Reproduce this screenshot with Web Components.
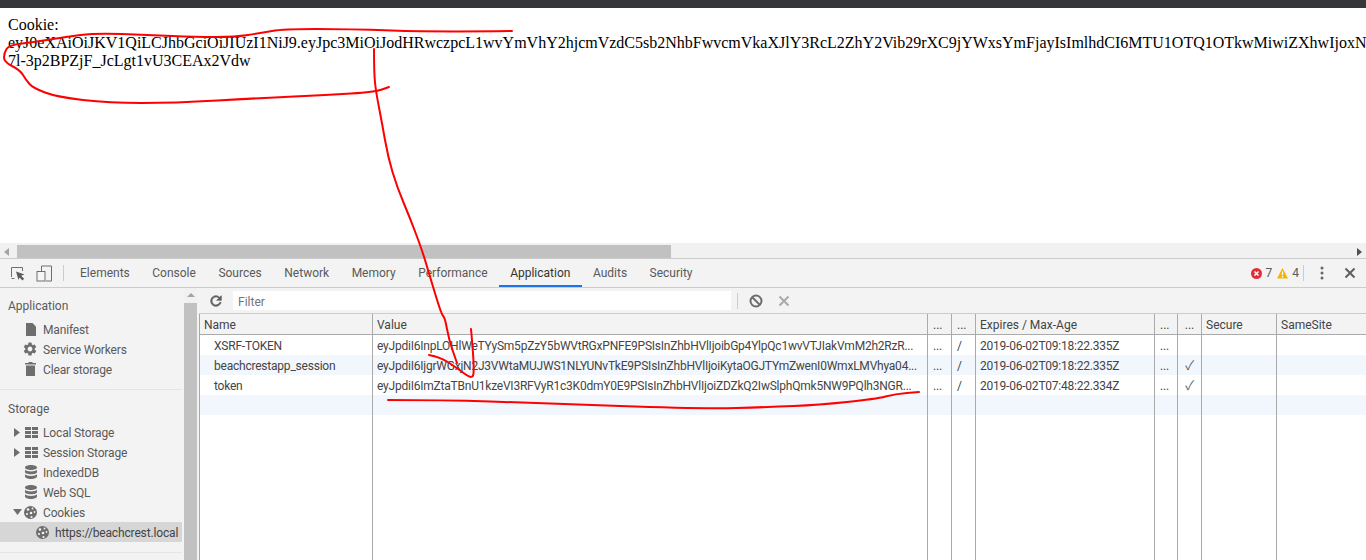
<!DOCTYPE html>
<html>
<head>
<meta charset="utf-8">
<title>Cookie</title>
<style>
  html, body { margin: 0; padding: 0; height: 100%; overflow: hidden; background: #fff; }
</style>
</head>
<body>
<app-shot>
  <cookie-page>Cookie:<br>eyJ0eXAiOiJKV1QiLCJhbGciOiJIUzI1NiJ9.eyJpc3MiOiJodHRwczpcL1wvYmVhY2hjcmVzdC5sb2NhbFwvcmVkaXJlY3RcL2ZhY2Vib29rXC9jYWxsYmFjayIsImlhdCI6MTU1OTQ1OTkwMiwiZXhwIjoxN<br>7l-3p2BPZjF_JcLgt1vU3CEAx2Vdw</cookie-page>
  <h-scroll></h-scroll>
  <dev-tools></dev-tools>
  <red-ink></red-ink>
</app-shot>

<script>
const ICONS = {
  inspect: '<path d="M1.5 11V1.5h11V5M1.5 12.5h3" fill="none" stroke="#6e6e6e"/><path d="M6 5.5l8.5 3-3.4 1.3 3 3-1.6 1.6-3-3L8.500 14z" fill="#5a5a5a"/>',
  device: '<path d="M5.500 6.500V1h10v15H10" fill="none" stroke="#6e6e6e"/><rect x="1" y="6.500" width="8" height="9.500" fill="#fff" fill-opacity=".3" stroke="#6e6e6e"/>',
  refresh: '<path d="M17.65 6.35A7.958 7.958 0 0 0 12 4c-4.42 0-7.99 3.58-7.99 8s3.57 8 7.99 8c3.73 0 6.84-2.55 7.73-6h-2.08A5.99 5.99 0 0 1 12 18c-3.31 0-6-2.69-6-6s2.69-6 6-6c1.66 0 3.14.69 4.22 1.78L13 11h7V4l-2.35 2.35z" fill="#5f5f5f" stroke="#5f5f5f"/>',
  block: '<circle cx="7" cy="7" r="5.500" fill="none" stroke="#6e6e6e" stroke-width="2"/><path d="M3 3l8 8" stroke="#6e6e6e" stroke-width="2"/>',
  cross: '<path d="M1.500 1.500l9 9M10.500 1.500l-9 9" stroke="currentColor" stroke-width="2" fill="none"/>',
  err: '<circle cx="5.500" cy="5.500" r="5.500" fill="#e32e38"/><path d="M3.500 3.500l4 4M7.500 3.500l-4 4" stroke="#fff" stroke-width="1.500"/>',
  warn: '<path d="M5.500 0L11 10.500H0z" fill="#f4b400"/><path d="M5.500 3.500v3.500M5.500 8v1.500" stroke="#fff" stroke-width="1.200"/>',
  kebab: '<circle cx="2" cy="2" r="1.500" fill="#666"/><circle cx="2" cy="7" r="1.500" fill="#666"/><circle cx="2" cy="12" r="1.500" fill="#666"/>',
  doc: '<path d="M0 0h6.500L10 3.500V13H0z" fill="#6e6e6e"/>',
  gear: '<path d="M19.14 12.94c.04-.3.06-.61.06-.94 0-.32-.02-.64-.07-.94l2.03-1.58a.49.49 0 0 0 .12-.61l-1.92-3.32a.488.488 0 0 0-.59-.22l-2.39.96c-.5-.38-1.03-.7-1.62-.94l-.36-2.54a.484.484 0 0 0-.48-.41h-3.84c-.24 0-.43.17-.47.41l-.36 2.54c-.59.24-1.13.57-1.62.94l-2.39-.96c-.22-.08-.47 0-.59.22L2.74 8.87c-.12.21-.08.47.12.61l2.03 1.58c-.05.3-.09.63-.09.94s.02.64.07.94l-2.03 1.58a.49.49 0 0 0-.12.61l1.92 3.32c.12.22.37.29.59.22l2.39-.96c.5.38 1.03.7 1.62.94l.36 2.54c.05.24.24.41.48.41h3.84c.24 0 .44-.17.47-.41l.36-2.54c.59-.24 1.13-.56 1.62-.94l2.39.96c.22.08.47 0 .59-.22l1.92-3.32c.12-.22.07-.47-.12-.61l-2.01-1.58zM12 15.6c-1.98 0-3.6-1.62-3.6-3.6s1.62-3.6 3.6-3.6 3.6 1.62 3.6 3.6-1.62 3.6-3.6 3.6z" fill="#6e6e6e"/>',
  trash: '<path d="M3.500 0h4v1H11v1.500H0V1h3.500zM1 3.500h9V14H1z" fill="#6e6e6e"/>',
  grid: '<path d="M0 0h6v3H0zM7 0h6v3H7zM0 4h6v3H0zM7 4h6v3H7zM0 8h6v3H0zM7 8h6v3H7z" fill="#6e6e6e"/>',
  db: '<path d="M0 2.500C0 1 2.700 0 6 0s6 1 6 2.500S9.300 5 6 5 0 4 0 2.500zM0 4.800C1 6 3.300 6.500 6 6.500s5-.5 6-1.700V7c0 1.300-2.700 2.300-6 2.300S0 8.300 0 7zM0 9.300c1 1.200 3.300 1.700 6 1.700s5-.5 6-1.700v2.200C12 12.800 9.300 14 6 14s-6-1.200-6-2.500z" fill="#6e6e6e"/>',
  cookie: '<circle cx="6.500" cy="6.500" r="6.500" fill="#6e6e6e"/><circle cx="4" cy="3.500" r="1.300" fill="#f3f3f3"/><circle cx="8.500" cy="2.500" r=".9" fill="#f3f3f3"/><circle cx="3" cy="8" r="1.100" fill="#f3f3f3"/><circle cx="7" cy="7" r="1.300" fill="#f3f3f3"/><circle cx="10.500" cy="6" r=".9" fill="#f3f3f3"/><circle cx="7.500" cy="11" r="1.100" fill="#f3f3f3"/>',
  tri: '<path d="M0 0l6 4.500L0 9z" fill="#6e6e6e"/>',
  triDown: '<path d="M0 0h9L4.500 6z" fill="#6e6e6e"/>'
};

const ICON_BOX = {
  inspect: [15, 15], device: [17, 17], refresh: [24, 24, 16], block: [14, 14],
  cross: [12, 12], err: [11, 11], warn: [11, 11], kebab: [4, 14], doc: [10, 13],
  gear: [24, 24, 16], trash: [11, 14], grid: [13, 11], db: [12, 14], cookie: [13, 13],
  tri: [6, 9], triDown: [9, 6]
};

class DtIcon extends HTMLElement {
  connectedCallback() {
    const name = this.getAttribute('name');
    const box = ICON_BOX[name];
    const w = box[2] || box[0];
    const h = box[2] || box[1];
    this.attachShadow({mode: 'open'});
    this.shadowRoot.innerHTML = `
      <style>
        :host{ display: inline-flex; flex: none; line-height: 0; }
      </style>
      <svg width="${w}" height="${h}" viewBox="0 0 ${box[0]} ${box[1]}">${ICONS[name]}</svg>`;
  }
}
customElements.define('dt-icon', DtIcon);

class AppShot extends HTMLElement {
  constructor() {
    super();
    this.attachShadow({mode: 'open'});
    this.shadowRoot.innerHTML = `
      <style>
        :host{
          display: flex; flex-direction: column; position: relative;
          width: 1366px; height: 560px; overflow: hidden;
          border-top: 8px solid #35363a; box-sizing: border-box;
        }
      </style>
      <slot></slot>`;
  }
}
customElements.define('app-shot', AppShot);

class CookiePage extends HTMLElement {
  constructor() {
    super();
    this.attachShadow({mode: 'open'});
    this.shadowRoot.innerHTML = `
      <style>
        :host{
          display: block; height: 235px; box-sizing: border-box; padding: 8px;
          overflow: hidden; white-space: nowrap; background: #fff; color: #000;
          font: 16px "Liberation Serif", "Times New Roman", serif;
        }
      </style>
      <slot></slot>`;
  }
}
customElements.define('cookie-page', CookiePage);

class HScroll extends HTMLElement {
  constructor() {
    super();
    this.attachShadow({mode: 'open'});
    this.shadowRoot.innerHTML = `
      <style>
        :host{
          display: flex; align-items: center; height: 15px; flex: none;
          background: #f1f1f1; padding: 2px 4px 0 4px; box-sizing: border-box;
        }
        .l{ width: 0; height: 0; border: 4px solid transparent; border-left: 0; border-right: 5px solid #a3a3a3; margin-right: 8px; }
        .thumb{ width: 654px; height: 13px; background: #c1c1c1; }
        .r{ width: 0; height: 0; border: 4px solid transparent; border-right: 0; border-left: 5px solid #505050; margin-left: auto; }
      </style>
      <span class="l"></span><span class="thumb"></span><span class="r"></span>`;
  }
}
customElements.define('h-scroll', HScroll);

class DevTools extends HTMLElement {
  constructor() {
    super();
    this.attachShadow({mode: 'open'});
    this.shadowRoot.innerHTML = `
      <style>
        :host{
          display: flex; flex-direction: column; flex: 1; min-height: 0;
          font: 12px Roboto, "Open Sans", sans-serif; color: #333;
          background: #f3f3f3; border-top: 1px solid #ccc;
        }
        .body{ display: flex; flex: 1; min-height: 0; }
      </style>
      <dt-toolbar></dt-toolbar>
      <div class="body">
        <dt-sidebar></dt-sidebar>
        <cookie-pane></cookie-pane>
      </div>`;
  }
}
customElements.define('dev-tools', DevTools);

class DtToolbar extends HTMLElement {
  constructor() {
    super();
    const tabs = ['Elements','Console','Sources','Network','Memory','Performance','Application','Audits','Security'];
    this.attachShadow({mode: 'open'});
    this.shadowRoot.innerHTML = `
      <style>
        :host{
          display: flex; align-items: stretch; height: 28px; flex: none;
          border-bottom: 1px solid #ccc; color: #5a5a5a;
        }
        .tools{ display: flex; align-items: center; padding-left: 10px; }
        .tools dt-icon:nth-child(2){ margin-left: 11px; }
        .sep{ width: 1px; height: 16px; background: #ccc; margin: 0 4.8px 0 10px; }
        .tab{ display: flex; align-items: center; padding: 0 11.25px; }
        .tab.on{ color: #333; box-shadow: inset 0 -2px 0 #1a73e8; }
        .status{ margin-left: auto; display: flex; align-items: center; }
        .status span{ margin: 0 5px 0 4px; color: #5a5a5a; }
        .status span.last{ margin: 0 4px; }
        .status .sep{ margin: 0 16px 0 0; height: 16px; }
        .kebab{ margin-right: 20px; }
        .close{ color: #5f5f5f; margin-right: 10px; }
      </style>
      <div class="tools">
        <dt-icon name="inspect"></dt-icon>
        <dt-icon name="device"></dt-icon>
        <i class="sep"></i>
      </div>
      ${tabs.map(t => `<div class="tab${t === 'Application' ? ' on' : ''}">${t}</div>`).join('')}
      <div class="status">
        <dt-icon name="err"></dt-icon><span>7</span>
        <dt-icon name="warn"></dt-icon><span class="last">4</span>
        <i class="sep"></i>
        <dt-icon name="kebab" class="kebab"></dt-icon>
        <dt-icon name="cross" class="close"></dt-icon>
      </div>`;
  }
}
customElements.define('dt-toolbar', DtToolbar);

class SideItem extends HTMLElement {
  constructor() {
    super();
    this.attachShadow({mode: 'open'});
    this.shadowRoot.innerHTML = `
      <style>
        :host{
          display: flex; align-items: center; height: 20px; color: #5a5a5a; box-sizing: border-box;
          padding: 1px 0 0 var(--pad, 25px); white-space: nowrap; position: relative;
          letter-spacing: -.15px;
        }
        :host([selected]){ background: #d6d6d6; color: #444; }
        .arrow{ position: absolute; left: 14px; top: 6px; line-height: 0; }
        .ic{ width: 18px; display: flex; flex: none; margin-top: -1px; }
      </style>
      <span class="arrow"><slot name="arrow"></slot></span>
      <span class="ic"><slot name="icon"></slot></span>
      <slot></slot>`;
  }
}
customElements.define('side-item', SideItem);

class DtSidebar extends HTMLElement {
  constructor() {
    super();
    this.attachShadow({mode: 'open'});
    this.shadowRoot.innerHTML = `
      <style>
        :host{ display: flex; width: 199px; flex: none; }
        .list{ width: 184px; flex: none; box-sizing: border-box; padding-right: 2px; overflow: hidden; }
        h4{ margin: 0; font: inherit; color: #5a5a5a; padding-left: 8px; line-height: 16px; }
        .top{ padding-top: 10px; }
        .top h4{ margin-bottom: 5px; }
        .rule{ height: 1px; background: #e4e4e4; margin: 10px 0 11px; }
        .storage h4{ margin-bottom: 5px; }
        .bar{ width: 13px; flex: none; background: #f1f1f1; display: flex; flex-direction: column; }
        .up{ height: 15px; display: flex; justify-content: center; padding-top: 5px; box-sizing: border-box; }
        .up i{ width: 0; height: 0; border: 4px solid transparent; border-top: 0; border-bottom: 4px solid #a3a3a3; }
        .thumb{ flex: 1; background: #c1c1c1; }
        .gap{ width: 2px; background: #f3f3f3; }
      </style>
      <div class="list">
        <div class="top">
          <h4>Application</h4>
          <side-item><dt-icon slot="icon" name="doc" style="margin-left:1px"></dt-icon>Manifest</side-item>
          <side-item><dt-icon slot="icon" name="gear" style="margin-left:-3px"></dt-icon>Service Workers</side-item>
          <side-item><dt-icon slot="icon" name="trash"></dt-icon>Clear storage</side-item>
        </div>
        <div class="rule"></div>
        <div class="storage">
          <h4>Storage</h4>
          <side-item><dt-icon slot="arrow" name="tri"></dt-icon><dt-icon slot="icon" name="grid"></dt-icon>Local Storage</side-item>
          <side-item><dt-icon slot="arrow" name="tri"></dt-icon><dt-icon slot="icon" name="grid"></dt-icon>Session Storage</side-item>
          <side-item><dt-icon slot="icon" name="db"></dt-icon>IndexedDB</side-item>
          <side-item><dt-icon slot="icon" name="db"></dt-icon>Web SQL</side-item>
          <side-item><dt-icon slot="arrow" name="triDown" style="margin-left:-1px;margin-top:1px"></dt-icon><dt-icon slot="icon" name="cookie" style="margin-left:-1px"></dt-icon>Cookies</side-item>
          <side-item selected style="--pad:36px"><dt-icon slot="icon" name="cookie"></dt-icon><span style="margin-left:1px">https://beachcrest.local</span></side-item>
        </div>
        <div class="rule"></div>
      </div>
      <div class="bar"><div class="up"><i></i></div><div class="thumb"></div></div>
      <div class="gap"></div>`;
  }
}
customElements.define('dt-sidebar', DtSidebar);

class CookiePane extends HTMLElement {
  constructor() {
    super();
    const cols = '173px 555px 24px 24px 179px 23px 24px 75px 1fr';
    const head = ['Name','Value','...','...','Expires / Max-Age','...','...','Secure','SameSite'];
    const rows = [
      ['XSRF-TOKEN','eyJpdiI6InpLOHlWeTYySm5pZzY5bWVtRGxPNFE9PSIsInZhbHVlIjoibGp4YlpQc1wvVTJIakVmM2h2RzR...','...','/','2019-06-02T09:18:22.335Z','...','','',''],
      ['beachcrestapp_session','eyJpdiI6IjgrWGxjN2J3VWtaMUJWS1NLYUNvTkE9PSIsInZhbHVlIjoiKytaOGJTYmZwenI0WmxLMVhya04...','...','/','2019-06-02T09:18:22.335Z','...','✓','',''],
      ['token','eyJpdiI6ImZtaTBnU1kzeVI3RFVyR1c3K0dmY0E9PSIsInZhbHVlIjoiZDZkQ2IwSlphQmk5NW9PQlh3NGR...','...','/','2019-06-02T07:48:22.334Z','...','✓','',''],
      ['','','','','','','','','']
    ];
    const cells = (r, cls) => `<div class="row ${cls}">${r.map((c, i) => `<div class="c${i}">${c}</div>`).join('')}</div>`;
    this.attachShadow({mode: 'open'});
    this.shadowRoot.innerHTML = `
      <style>
        :host{ display: flex; flex-direction: column; flex: 1; min-width: 0; }
        .filter{
          display: flex; align-items: center; height: 26px; flex: none; box-sizing: border-box;
          border-bottom: 1px solid #ccc; padding-left: 9px;
        }
        .filter input{
          width: 498px; height: 19px; box-sizing: border-box; border: 0; padding: 2px 4px 0 5px;
          margin-left: 9px; background: #fff; font: inherit; outline: 0;
        }
        .filter input::placeholder{ color: #757575; opacity: 1; }
        .filter .sep{ width: 1px; height: 16px; background: #ccc; margin: 0 11px 0 6px; }
        .filter .x{ color: #a9a9a9; margin-left: 15px; }
        .grid{ flex: 1; display: flex; flex-direction: column; background: #fff; border-left: 1px solid #aaa; min-height: 0; }
        .row{ display: grid; grid-template-columns: ${cols}; height: 20px; line-height: 20px; flex: none; box-sizing: border-box; }
        .row > div{
          border-right: 1px solid #aaa; padding: 0 4px; overflow: hidden;
          white-space: nowrap; box-sizing: border-box; color: #444;
        }
        .row > div:last-child{ border-right: 0; }
        .row.head{ height: 21px; line-height: 22px; background: #f3f3f3; border-bottom: 1px solid #aaa; }
        .row.body > div{ letter-spacing: -.22px; padding-top: 1px; }
        .row.body .c0{ padding-left: 14px; }
        .row.body:nth-child(odd){ background: #f2f7fd; }
        .row.fill{ flex: 1; height: auto; }
        .c2,.c3,.c5{ padding-left: 5px !important; }
        .c6{ text-align: center; padding: 0 !important; }
        .row.body .c6{ font: 13px "Noto Sans CJK JP", "DejaVu Sans", sans-serif; line-height: 20px; color: #666; }
      </style>
      <div class="filter">
        <dt-icon name="refresh"></dt-icon>
        <input placeholder="Filter">
        <i class="sep"></i>
        <dt-icon name="block"></dt-icon>
        <dt-icon name="cross" class="x"></dt-icon>
      </div>
      <div class="grid">
        ${cells(head, 'head')}
        ${rows.map(r => cells(r, 'body')).join('')}
        ${cells(['','','','','','','','',''], 'fill')}
      </div>`;
  }
}
customElements.define('cookie-pane', CookiePane);

// the red pen marks drawn over the screenshot
class RedInk extends HTMLElement {
  constructor() {
    super();
    const strokes = [
      [[512,31],[435,32],[348,29],[283,29],[261,33],[235,37],[196,37],[148,35],[96,33],[65,37],[35,42],[9,45],[4,53],[4,62],[20,70],[26,80],[33,88],[57,97],[109,103],[174,103],[261,98],[327,95],[375,92],[389,87]],
      [[374,49],[374,73],[376,92],[382,123],[388,157],[397,187],[410,218],[422,250],[428,270],[437,300],[442,315],[445,318],[449,340],[457,363]],
      [[429,355],[440,357],[457,368],[473,380],[474,367],[472,340],[471,329]],
      [[388,400],[443,400],[537,403],[703,409],[770,407],[818,405],[876,399],[895,394],[919,392]]
    ];
    const toPath = pts => {
      let d = `M${pts[0][0]} ${pts[0][1]}`;
      for (let i = 1; i < pts.length - 1; i++) {
        const mx = (pts[i][0] + pts[i + 1][0]) / 2;
        const my = (pts[i][1] + pts[i + 1][1]) / 2;
        d += `Q${pts[i][0]} ${pts[i][1]} ${mx} ${my}`;
      }
      const last = pts[pts.length - 1];
      return d + `L${last[0]} ${last[1]}`;
    };
    this.attachShadow({mode: 'open'});
    this.shadowRoot.innerHTML = `
      <style>
        :host{ position: absolute; left: 0; top: -8px; width: 1366px; height: 560px; pointer-events: none; }
        svg{ display: block; }
        path{ fill: none; stroke: #f00; stroke-width: 2; stroke-linecap: round; stroke-linejoin: round; }
      </style>
      <svg width="1366" height="560">${strokes.map(s => `<path d="${toPath(s)}"/>`).join('')}</svg>`;
  }
}
customElements.define('red-ink', RedInk);
</script>
</body>
</html>
